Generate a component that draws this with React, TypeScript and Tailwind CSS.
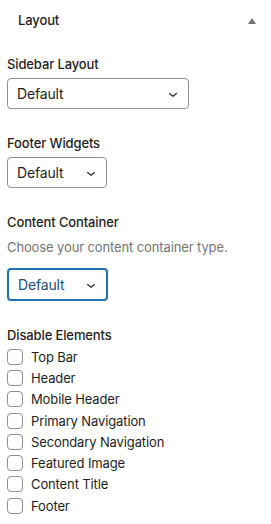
import React from 'react';

const font = { fontFamily: 'Inter, "Noto Sans", "Liberation Sans", sans-serif' };

const Chevron: React.FC = () => (
  <svg width="18" height="18" viewBox="0 0 24 24" className="shrink-0" fill="#1e1e1e">
    <path d="M17.5 11.6L12 16l-5.5-4.4.9-1.2L12 14l4.5-3.6 1 1.2z" />
  </svg>
);

const Select: React.FC<{ width: string; focused?: boolean }> = ({ width, focused }) => (
  <div
    className={`${width} flex items-center justify-between pl-[9px] pr-[6px] rounded-[4px] bg-white text-[14px] tracking-[-0.15px] ${
      focused
        ? 'h-[33px] border-2 border-[#2271b1] pl-[8px] text-[#1d4f7a]'
        : 'h-[31px] border border-[#8c8f94] text-[#1e1e1e]'
    }`}
  >
    <span>Default</span>
    <Chevron />
  </div>
);

const items = [
  'Top Bar',
  'Header',
  'Mobile Header',
  'Primary Navigation',
  'Secondary Navigation',
  'Featured Image',
  'Content Title',
  'Footer',
];

export default function App() {
  return (
    <div
      className="w-[271px] h-[524px] bg-white overflow-hidden text-[13px] tracking-[-0.12px] text-[#1e1e1e]"
      style={font}
    >
      {/* Panel header */}
      <div className="h-[42px] flex items-center justify-between pl-[18px] pr-[15px]">
        <span className="font-medium text-[13px]">Layout</span>
        <svg width="8" height="6" viewBox="0 0 8 6" fill="#757575">
          <path d="M4 0L8 6H0z" />
        </svg>
      </div>

      <div className="px-[7px]">
        <div className="mt-[13px] leading-[18px] font-medium">Sidebar Layout</div>
        <div className="mt-[5px]">
          <Select width="w-[182px]" />
        </div>

        <div className="mt-[25px] leading-[18px] font-medium">Footer Widgets</div>
        <div className="mt-[5px]">
          <Select width="w-[100px]" />
        </div>

        <div className="mt-[25px] leading-[18px] font-medium">Content Container</div>
        <div className="mt-[7px] leading-[18px] text-[#757575]">Choose your content container type.</div>
        <div className="mt-[12px]">
          <Select width="w-[101px]" focused />
        </div>

        <div className="mt-[25px] leading-[18px] font-medium">Disable Elements</div>
        <div className="mt-[2px] flex flex-col">
          {items.map(label => (
            <label key={label} className="h-[21.3px] flex items-center gap-[8px]">
              <span className="w-[16px] h-[16px] rounded-[4px] border border-[#8c8f94] bg-white shrink-0" />
              <span className="leading-[18px]">{label}</span>
            </label>
          ))}
        </div>
      </div>
    </div>
  );
}
